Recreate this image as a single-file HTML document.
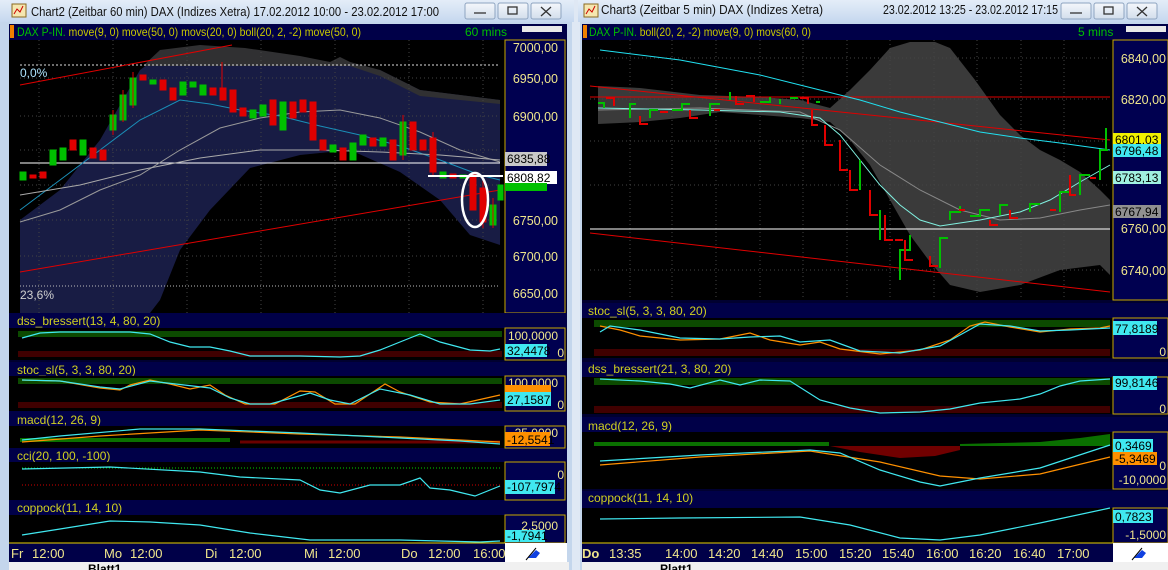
<!DOCTYPE html>
<html><head><meta charset="utf-8"><style>
html,body{margin:0;padding:0;background:#c9d9ee;width:1168px;height:570px;overflow:hidden}
svg{display:block}
text{font-family:"Liberation Sans",sans-serif}
</style></head><body>
<svg width="1168" height="570" viewBox="0 0 1168 570" xmlns="http://www.w3.org/2000/svg">
<defs>
<linearGradient id="tb" x1="0" y1="0" x2="0" y2="1"><stop offset="0" stop-color="#e4edf8"/><stop offset="1" stop-color="#c6d8ef"/></linearGradient>
<linearGradient id="btn" x1="0" y1="0" x2="0" y2="1"><stop offset="0" stop-color="#f4f7fb"/><stop offset="1" stop-color="#d3deec"/></linearGradient>
</defs>
<!-- frames -->
<rect x="0" y="0" width="574" height="570" fill="#c4d6ec"/>
<rect x="578" y="0" width="590" height="570" fill="#c4d6ec"/>
<rect x="572" y="0" width="8" height="570" fill="#dfe8f4"/>
<rect x="0" y="0" width="574" height="22" fill="url(#tb)"/>
<rect x="578" y="0" width="590" height="22" fill="url(#tb)"/>
<!-- title icons -->
<rect x="12" y="4" width="14" height="13" fill="#f5e7b0" stroke="#8a6a20"/><path d="M14 14 l3-5 3 3 3-6" stroke="#c00" fill="none"/>
<rect x="584" y="4" width="14" height="13" fill="#f5e7b0" stroke="#8a6a20"/><path d="M586 14 l3-5 3 3 3-6" stroke="#c00" fill="none"/>
<text x="31" y="16" font-size="12.5" fill="#111" textLength="408" lengthAdjust="spacingAndGlyphs">Chart2 (Zeitbar 60 min)  DAX (Indizes Xetra) 17.02.2012 10:00 - 23.02.2012 17:00</text>
<text x="601" y="14" font-size="12.5" fill="#111" textLength="222" lengthAdjust="spacingAndGlyphs">Chart3 (Zeitbar 5 min)  DAX (Indizes Xetra)</text>
<text x="883" y="14" font-size="12.5" fill="#111" textLength="175" lengthAdjust="spacingAndGlyphs">23.02.2012 13:25 - 23.02.2012 17:15</text>
<!-- buttons -->
<g stroke="#8ea4c0" fill="url(#btn)">
<rect x="465" y="3" width="30" height="16" rx="2"/><rect x="498" y="3" width="30" height="16" rx="2"/><rect x="531" y="3" width="30" height="16" rx="2"/>
<rect x="1061" y="3" width="30" height="16" rx="2"/><rect x="1094" y="3" width="30" height="16" rx="2"/><rect x="1127" y="3" width="30" height="16" rx="2"/>
</g>
<g stroke="#333" fill="none" stroke-width="1.3">
<path d="M474 13h12"/><rect x="508" y="7" width="9" height="7"/><path d="M541 7l10 9M551 7l-10 9"/>
<path d="M1070 13h12"/><rect x="1104" y="7" width="9" height="7"/><path d="M1137 7l10 9M1147 7l-10 9"/>
</g>

<!-- ============ LEFT CHART ============ -->
<rect x="9" y="24" width="558" height="540" fill="#000030"/>
<rect x="9" y="24" width="558" height="16" fill="#000048"/>
<rect x="10" y="25" width="4" height="13" fill="#f08000"/>
<rect x="522" y="26" width="40" height="6" fill="#e8e8e8"/>
<text x="17" y="36" font-size="12" fill="#c8c800" textLength="344" lengthAdjust="spacingAndGlyphs"><tspan fill="#00c000">DAX P-IN.</tspan> move(9, 0) move(50, 0) movs(20, 0) boll(20, 2, -2) move(50, 0)</text>
<text x="465" y="36" font-size="12" fill="#00c000">60 mins</text>
<!-- main plot -->
<rect x="9" y="40" width="496" height="273" fill="#000"/>
<polygon fill="#181c44" points="20,220 60,190 100,140 140,70 160,55 200,48 245,50 330,62 380,70 420,90 460,95 500,100 500,245 470,235 440,200 400,172 350,150 300,155 250,168 210,210 180,250 160,300 150,313 20,313"/>
<polygon fill="#303032" points="144,65 160,50 200,45 245,48 300,56 330,62 340,57 350,62 380,70 420,90 460,95 500,100 500,104 460,100 420,96 380,76 350,66 144,66"/>
<g stroke="#444" stroke-dasharray="1,3">
<path d="M39 40V313M113 40V313M187 40V313M261 40V313M335 40V313M409 40V313M483 40V313"/>
<path d="M20 78H500M20 116H500M20 150H500M20 185H500M20 220H500M20 256H500"/>
</g>
<path d="M20 65H500" stroke="#ddd" stroke-dasharray="2,2"/>
<path d="M20 286H500" stroke="#bbb" stroke-dasharray="1,2"/>
<text x="20" y="77" font-size="12" fill="#aee4ff">0,0%</text>
<text x="20" y="299" font-size="12" fill="#d0d0d0">23,6%</text>
<path d="M20 163H500" stroke="#fff"/>
<path d="M20 85L232 45M20 272L500 190" stroke="#e00000" stroke-width="1"/>
<polyline fill="none" stroke="#9a9a9a" points="20,222 60,210 100,190 140,175 180,150 220,128 260,118 300,112 340,110 380,118 420,132 460,150 500,162"/>
<polyline fill="none" stroke="#1a8fb8" points="20,210 60,180 100,150 140,120 180,100 210,104 240,110 280,116 320,126 360,135 400,146 440,160 480,175 500,180"/>
<polyline fill="none" stroke="#aaa" points="20,195 80,185 140,170 200,158 260,150 320,150 380,152 440,155 500,160"/>
<g stroke-width="1">
<!-- candles: green -->
<g fill="#00c000" stroke="#00c000">
<rect x="20" y="172" width="6" height="8"/><rect x="50" y="150" width="6" height="15"/><rect x="60" y="148" width="6" height="12"/><rect x="80" y="140" width="6" height="15"/>
<rect x="110" y="115" width="6" height="15"/><rect x="120" y="95" width="6" height="25"/><rect x="130" y="78" width="6" height="27"/><rect x="150" y="80" width="6" height="4"/>
<rect x="180" y="82" width="6" height="13"/><rect x="190" y="82" width="6" height="5"/><rect x="200" y="85" width="6" height="10"/><rect x="250" y="110" width="6" height="8"/>
<rect x="260" y="105" width="6" height="11"/><rect x="280" y="102" width="6" height="28"/><rect x="330" y="145" width="6" height="7"/><rect x="350" y="143" width="6" height="17"/>
<rect x="360" y="135" width="6" height="10"/><rect x="380" y="138" width="6" height="8"/><rect x="400" y="122" width="6" height="33"/><rect x="440" y="172" width="6" height="6"/>
<rect x="460" y="175" width="6" height="3"/><rect x="490" y="205" width="6" height="20"/><rect x="498" y="185" width="5" height="15"/>
</g>
<g fill="#e00000" stroke="#e00000">
<rect x="30" y="175" width="6" height="3"/><rect x="40" y="172" width="6" height="6"/><rect x="70" y="140" width="6" height="10"/><rect x="90" y="148" width="6" height="10"/>
<rect x="100" y="150" width="6" height="10"/><rect x="140" y="75" width="6" height="5"/><rect x="160" y="80" width="6" height="10"/><rect x="170" y="88" width="6" height="12"/>
<rect x="210" y="88" width="6" height="7"/><rect x="220" y="88" width="6" height="12"/><rect x="230" y="90" width="6" height="22"/><rect x="240" y="108" width="6" height="8"/>
<rect x="270" y="100" width="6" height="25"/><rect x="290" y="102" width="6" height="16"/><rect x="300" y="100" width="6" height="12"/><rect x="310" y="102" width="6" height="38"/>
<rect x="320" y="140" width="6" height="10"/><rect x="340" y="148" width="6" height="12"/><rect x="370" y="138" width="6" height="8"/><rect x="390" y="140" width="6" height="20"/>
<rect x="410" y="122" width="6" height="28"/><rect x="420" y="140" width="6" height="10"/><rect x="430" y="138" width="6" height="34"/><rect x="450" y="174" width="6" height="4"/>
<rect x="470" y="175" width="6" height="35"/><rect x="480" y="188" width="6" height="34"/>
</g>
<path d="M222 62V100M113 110V135M123 90V122M133 72V108M403 115V160M433 132V176M483 180V228M493 198V228" stroke="#e00000"/>
</g>
<ellipse cx="475" cy="200" rx="13" ry="27" fill="none" stroke="#fff" stroke-width="2.5"/>
<path d="M428 176H503" stroke="#fff" stroke-width="2"/>
<!-- left axis -->
<rect x="505" y="40" width="60" height="273" fill="#000050" stroke="#c8a800"/>
<g font-size="12.5" fill="#f0e68c" text-anchor="end">
<text x="558" y="52">7000,00</text><text x="558" y="83">6950,00</text><text x="558" y="121">6900,00</text><text x="558" y="225">6750,00</text><text x="558" y="261">6700,00</text><text x="558" y="298">6650,00</text>
</g>
<rect x="505" y="152" width="42" height="14" fill="#c8c8c8"/><text x="507" y="163" font-size="12" fill="#000">6835,88</text>
<rect x="505" y="171" width="52" height="13" fill="#fff"/><text x="507" y="182" font-size="12" fill="#000">6808,82</text>
<rect x="505" y="183" width="42" height="8" fill="#00c000"/>

<!-- left indicators headers -->
<g fill="#000048"><rect x="9" y="313" width="558" height="15"/><rect x="9" y="362" width="558" height="14"/><rect x="9" y="411" width="558" height="15"/><rect x="9" y="448" width="558" height="14"/><rect x="9" y="500" width="558" height="15"/></g>
<g font-size="12" fill="#d0d020">
<text x="17" y="325">dss_bressert(13, 4, 80, 20)</text><text x="17" y="374">stoc_sl(5, 3, 3, 80, 20)</text><text x="17" y="424">macd(12, 26, 9)</text><text x="17" y="460">cci(20, 100, -100)</text><text x="17" y="512">coppock(11, 14, 10)</text>
</g>
<g fill="#000"><rect x="9" y="328" width="496" height="32"/><rect x="9" y="376" width="496" height="35"/><rect x="9" y="426" width="496" height="22"/><rect x="9" y="462" width="496" height="38"/><rect x="9" y="515" width="496" height="28"/></g>
<g fill="#0c4a00"><rect x="18" y="331" width="484" height="6"/><rect x="18" y="378" width="484" height="6"/></g>
<g fill="#400000"><rect x="18" y="351" width="484" height="6"/><rect x="18" y="402" width="484" height="6"/></g>
<path d="M22 468H500" stroke="#00d000" stroke-dasharray="1,2"/><path d="M22 485H500" stroke="#d00000" stroke-dasharray="1,2"/>
<!-- macd bars -->
<path d="M20 440h210" stroke="#0a7000" stroke-width="4"/><path d="M240 442h260" stroke="#6a0000" stroke-width="3"/>
<g fill="none" stroke-width="1.2">
<polyline stroke="#40e8f0" points="22,338 40,333 60,332 130,332 150,334 170,342 190,347 210,347 230,351 250,356 300,356 340,357 360,356 380,350 400,342 420,334 440,342 470,350 490,351 500,349"/>
<polyline stroke="#ff9000" points="22,380 60,381 100,388 120,390 130,385 150,380 170,384 190,389 210,385 225,395 245,404 275,404 300,391 315,392 335,404 355,404 385,384 400,392 430,402 460,404 500,395"/>
<polyline stroke="#40e8f0" points="22,380 60,381 100,387 120,389 150,381 210,388 230,398 250,404 270,404 310,393 330,400 350,404 380,389 410,395 440,404 470,404 500,400"/>
<polyline stroke="#ff9000" points="22,442 100,436 200,430 300,434 400,437 500,442"/>
<polyline stroke="#40e8f0" points="22,440 60,436 140,429 200,429 300,433 400,438 460,441 500,444"/>
<polyline stroke="#40e8f0" points="22,469 110,467 200,472 240,477 300,480 320,490 340,493 370,485 400,485 420,478 430,488 450,490 475,496 500,486"/>
<polyline stroke="#40e8f0" points="22,535 60,529 110,521 150,522 200,525 250,533 310,540 400,540 480,542 500,541"/>
</g>
<g fill="#000050" stroke="#c8a800"><rect x="505" y="328" width="60" height="32"/><rect x="505" y="376" width="60" height="35"/><rect x="505" y="426" width="60" height="22"/><rect x="505" y="462" width="60" height="38"/><rect x="505" y="515" width="60" height="28"/></g>
<g font-size="12" fill="#f0e68c" text-anchor="end">
<text x="558" y="340">100,0000</text><text x="564" y="357">0</text><text x="558" y="387">100,0000</text><text x="564" y="409">0</text><text x="558" y="437">25,0000</text><text x="564" y="479">0</text><text x="558" y="530">2,5000</text>
</g>
<rect x="505" y="344" width="42" height="13" fill="#40e8f0"/><text x="507" y="355" font-size="12" fill="#000">32,4478</text>
<rect x="505" y="385" width="46" height="8" fill="#ff9000"/>
<rect x="505" y="392" width="46" height="14" fill="#40e8f0"/><text x="507" y="404" font-size="12" fill="#000">27,1587</text>
<rect x="505" y="432" width="45" height="14" fill="#ff9000"/><text x="507" y="444" font-size="12" fill="#000">-12,5541</text>
<rect x="505" y="480" width="50" height="14" fill="#40e8f0"/><text x="507" y="491" font-size="12" fill="#000">-107,7974</text>
<rect x="505" y="530" width="40" height="12" fill="#40e8f0"/><text x="507" y="540" font-size="12" fill="#000">-1,7941</text>
<!-- left time axis -->
<rect x="9" y="543" width="496" height="19" fill="#000048"/>
<path d="M9 543H505" stroke="#e8d000"/>
<g font-size="13" fill="#f0e68c"><text x="11" y="558">Fr</text><text x="32" y="558">12:00</text><text x="104" y="558">Mo</text><text x="130" y="558">12:00</text><text x="205" y="558">Di</text><text x="229" y="558">12:00</text><text x="304" y="558">Mi</text><text x="328" y="558">12:00</text><text x="401" y="558">Do</text><text x="428" y="558">12:00</text><text x="473" y="558">16:00</text></g>
<rect x="505" y="543" width="62" height="19" fill="#fff"/>
<path d="M528 558l8-8 4 3-4 5z" fill="#1040e0"/><path d="M526 560l10-12" stroke="#000"/>
<rect x="9" y="562" width="560" height="8" fill="#f0f0f0"/>
<text x="88" y="573" font-size="12" font-weight="bold" fill="#000">Blatt1</text>

<!-- ============ RIGHT CHART ============ -->
<rect x="582" y="24" width="586" height="540" fill="#000030"/>
<rect x="582" y="24" width="586" height="16" fill="#000048"/>
<rect x="583" y="25" width="4" height="13" fill="#f08000"/>
<rect x="1126" y="26" width="40" height="6" fill="#e8e8e8"/>
<text x="589" y="36" font-size="12" fill="#c8c800" textLength="222" lengthAdjust="spacingAndGlyphs"><tspan fill="#00c000">DAX P-IN.</tspan> boll(20, 2, -2) move(9, 0) movs(60, 0)</text>
<text x="1078" y="36" font-size="12" fill="#00c000">5 mins</text>
<rect x="582" y="40" width="531" height="260" fill="#000"/>
<polygon fill="#3a3a3a" points="598,86 640,88 700,95 760,97 800,100 830,108 850,90 870,70 890,48 910,42 935,42 950,48 975,80 1000,115 1020,135 1040,150 1060,160 1080,172 1100,190 1110,200 1110,275 1100,265 1060,270 1020,285 980,292 950,285 930,262 910,235 890,200 870,165 850,140 830,122 800,118 760,115 720,112 680,118 640,122 598,124"/>
<g stroke="#444" stroke-dasharray="1,3">
<path d="M630 40V300M672 40V300M716 40V300M760 40V300M803 40V300M847 40V300M890 40V300M934 40V300M977 40V300M1021 40V300M1064 40V300"/>
<path d="M590 58H1110M590 99H1110M590 141H1110M590 185H1110M590 270H1110"/>
</g>
<path d="M590 229H1110" stroke="#fff"/>
<path d="M590 97H1110" stroke="#e00000"/>
<path d="M590 86L1110 140M590 233L1110 292" stroke="#e00000"/>
<polyline fill="none" stroke="#20e0f0" points="600,50 680,60 760,75 820,90 860,100 900,112 940,122 980,132 1020,138 1060,143 1110,150"/>
<polyline fill="none" stroke="#888" points="598,110 700,108 800,112 840,130 880,165 920,190 960,210 1000,220 1040,218 1080,210 1110,205"/>
<polyline fill="none" stroke="#80f0e0" points="598,108 700,110 780,112 820,118 840,135 860,160 880,185 900,205 920,220 940,226 980,220 1020,212 1050,200 1080,182 1110,165"/>
<g stroke-width="2" fill="none">
<path stroke="#00c000" d="M598 103h6v5M630 118v-14h6M650 118v-8h8M672 110h10v-6h8M710 116v-12h10M730 100v-8M760 102h10v-5M780 104v-5M790 98h8M820 102h-4M860 190v-30M880 240v-30M900 280v-30h10v-15M940 268v-30h8M950 220v-8h10v-6M970 216h10v-6h10M1000 215v-10h8M1030 212v-8h10M1060 212v-20h10M1080 195v-20h10M1100 180v-30h8M1106 150v-22"/>
<path stroke="#e00000" d="M606 98h8v8M640 116v8h8M660 112h8M690 110v8h8M720 110h-6M736 96v8h8M746 96h8v6M800 98h8v6M812 110v15h6M825 125v20h8M840 140v30h8M850 170v20h8M870 190v25h8M885 215v25h8M895 240h8M905 240v20h8M930 256v10h8M965 210h-6M990 220v5h8M1010 210v8h8M1050 210h6M1070 175v20h6M1090 178h6"/>
</g>
<!-- right axis -->
<rect x="1113" y="40" width="55" height="260" fill="#000050" stroke="#c8a800"/>
<g font-size="12.5" fill="#f0e68c" text-anchor="end"><text x="1166" y="63">6840,00</text><text x="1166" y="104">6820,00</text><text x="1166" y="233">6760,00</text><text x="1166" y="275">6740,00</text></g>
<rect x="1113" y="133" width="48" height="13" fill="#f0f000"/><text x="1115" y="144" font-size="12" fill="#000">6801,03</text>
<rect x="1113" y="144" width="48" height="13" fill="#40e8f0"/><text x="1115" y="155" font-size="12" fill="#000">6796,48</text>
<rect x="1113" y="171" width="48" height="13" fill="#a0f0e0"/><text x="1115" y="182" font-size="12" fill="#000">6783,13</text>
<rect x="1113" y="205" width="48" height="13" fill="#909090"/><text x="1115" y="216" font-size="12" fill="#000">6767,94</text>
<!-- right indicators -->
<g fill="#000048"><rect x="582" y="303" width="586" height="15"/><rect x="582" y="362" width="586" height="15"/><rect x="582" y="417" width="586" height="15"/><rect x="582" y="491" width="586" height="17"/></g>
<g font-size="12" fill="#d0d020"><text x="588" y="315">stoc_sl(5, 3, 3, 80, 20)</text><text x="588" y="373">dss_bressert(21, 3, 80, 20)</text><text x="588" y="430">macd(12, 26, 9)</text><text x="588" y="502">coppock(11, 14, 10)</text></g>
<g fill="#000"><rect x="582" y="318" width="531" height="40" /><rect x="582" y="377" width="531" height="37"/><rect x="582" y="432" width="531" height="57"/><rect x="582" y="508" width="531" height="35"/></g>
<g fill="#0c4a00"><rect x="594" y="320" width="516" height="7"/><rect x="594" y="378" width="516" height="7"/></g>
<g fill="#400000"><rect x="594" y="349" width="516" height="7"/><rect x="594" y="406" width="516" height="7"/></g>
<g fill="#0a7000"><rect x="594" y="442" width="235" height="4"/><polygon points="960,446 960,444 1040,442 1080,438 1110,434 1110,446"/></g>
<polygon fill="#700000" points="830,446 860,452 900,458 935,456 960,450 960,446"/>
<g fill="none" stroke-width="1.2">
<polyline stroke="#ff9000" points="600,326 620,330 640,336 680,340 720,339 750,333 770,340 800,345 820,342 840,349 880,354 920,350 950,340 970,326 985,322 1010,327 1040,332 1070,329 1100,328 1110,326"/>
<polyline stroke="#40e8f0" points="600,332 610,326 640,330 680,338 720,339 750,337 780,336 800,342 830,340 860,351 900,353 940,346 960,335 980,324 1010,326 1040,331 1070,330 1110,328"/>
<polyline stroke="#40e8f0" points="600,379 640,381 670,384 690,388 720,380 740,385 760,380 790,381 820,400 850,408 880,413 920,412 950,409 980,403 1020,399 1040,394 1060,386 1080,381 1110,379"/>
<polyline stroke="#ff9000" points="600,465 700,457 810,451 880,462 940,476 980,479 1040,474 1110,457"/>
<polyline stroke="#40e8f0" points="600,461 700,455 810,450 840,453 880,470 920,482 940,486 980,478 1040,468 1110,445"/>
<polyline stroke="#40e8f0" points="600,519 680,518 800,517 850,525 900,538 940,540 980,535 1040,523 1110,508"/>
</g>
<g fill="#000050" stroke="#c8a800"><rect x="1113" y="318" width="55" height="40"/><rect x="1113" y="377" width="55" height="37"/><rect x="1113" y="432" width="55" height="57"/><rect x="1113" y="508" width="55" height="35"/></g>
<g font-size="12" fill="#f0e68c" text-anchor="end"><text x="1166" y="356">0</text><text x="1166" y="413">0</text><text x="1166" y="470">0</text><text x="1166" y="484">-10,0000</text><text x="1166" y="539">-1,5000</text></g>
<rect x="1113" y="321" width="44" height="14" fill="#40e8f0"/><text x="1115" y="333" font-size="12" fill="#000">77,8189</text>
<rect x="1113" y="376" width="44" height="14" fill="#40e8f0"/><text x="1115" y="387" font-size="12" fill="#000">99,8146</text>
<rect x="1113" y="439" width="40" height="13" fill="#40e8f0"/><text x="1115" y="450" font-size="12" fill="#000">0,3469</text>
<rect x="1113" y="452" width="44" height="13" fill="#ff9000"/><text x="1115" y="463" font-size="12" fill="#000">-5,3469</text>
<rect x="1113" y="510" width="40" height="13" fill="#40e8f0"/><text x="1115" y="521" font-size="12" fill="#000">0,7823</text>
<!-- right time axis -->
<rect x="582" y="543" width="531" height="19" fill="#000048"/>
<path d="M582 543H1113" stroke="#e8d000"/>
<g font-size="13" fill="#f0e68c"><text x="582" y="558" font-weight="bold">Do</text><text x="609" y="558">13:35</text><text x="665" y="558">14:00</text><text x="708" y="558">14:20</text><text x="751" y="558">14:40</text><text x="795" y="558">15:00</text><text x="839" y="558">15:20</text><text x="882" y="558">15:40</text><text x="926" y="558">16:00</text><text x="969" y="558">16:20</text><text x="1013" y="558">16:40</text><text x="1057" y="558">17:00</text></g>
<rect x="1113" y="543" width="55" height="19" fill="#fff"/>
<path d="M1134 558l8-8 4 3-4 5z" fill="#1040e0"/><path d="M1132 560l10-12" stroke="#000"/>
<rect x="582" y="562" width="586" height="8" fill="#f0f0f0"/>
<text x="660" y="573" font-size="12" font-weight="bold" fill="#000">Platt1</text>
</svg>
</body></html>
